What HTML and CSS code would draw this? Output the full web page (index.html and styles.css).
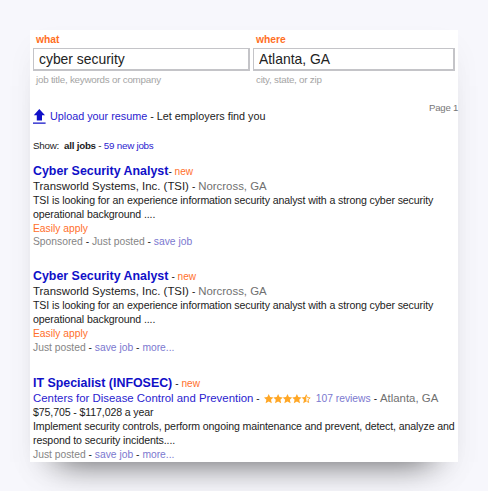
FILE: index.html
```html
<!DOCTYPE html>
<html lang="en">
<head>
<meta charset="utf-8">
<title>Job search</title>
<link rel="stylesheet" href="styles.css">
</head>
<body>
<main class="card">
  <form class="search">
    <label class="field what"><b>what</b><input value="cyber security"><small>job title, keywords or company</small></label>
    <label class="field where"><b>where</b><input value="Atlanta, GA"><small>city, state, or zip</small></label>
  </form>
  <div class="page">Page 1</div>
  <div class="upload">
    <svg width="13" height="16" viewBox="0 0 13 16"><path d="M6.3 0L12 6.3H9V11.5H3.8V6.3H.8Z M0 13.4H12.6V14.7H0Z"/></svg>
    <span><a>Upload your resume</a> - Let employers find you</span>
  </div>
  <div class="show">Show: &nbsp;<b>all jobs</b> - <a>59 new jobs</a></div>

  <article class="job first">
    <h2>Cyber Security Analyst<span class="tag"><i>-</i> new</span></h2>
    <div class="company">Transworld Systems, Inc. (TSI) <span class="sep">-</span> <span class="place">Norcross, GA</span></div>
    <p>TSI is looking for an experience information security analyst with a strong cyber security<br>operational background ....</p>
    <div class="easy">Easily apply</div>
    <div class="meta">Sponsored <i>-</i> Just posted <i>-</i> <a>save job</a></div>
  </article>

  <article class="job second">
    <h2>Cyber Security Analyst<span class="tag spaced"><i>-</i> new</span></h2>
    <div class="company">Transworld Systems, Inc. (TSI) <span class="sep">-</span> <span class="place">Norcross, GA</span></div>
    <p>TSI is looking for an experience information security analyst with a strong cyber security<br>operational background ....</p>
    <div class="easy">Easily apply</div>
    <div class="meta">Just posted <i>-</i> <a>save job</a> <i>-</i> <a>more...</a></div>
  </article>

  <article class="job third">
    <h2>IT Specialist (INFOSEC)<span class="tag spaced"><i>-</i> new</span></h2>
    <div class="company"><a>Centers for Disease Control and Prevention</a> <span class="sep">-</span>
      <svg class="stars" width="47" height="10" viewBox="0 0 47 10">
        <defs><path id="star" d="M4.7 0L6.1 3L9.4 3.4L7 5.7L7.8 9.2L4.7 7.4L1.6 9.2L2.4 5.7L0 3.4L3.3 3Z"/></defs>
        <use href="#star"/><use href="#star" x="9.4"/><use href="#star" x="18.8"/><use href="#star" x="28.2"/>
        <path d="M42.3 0V7.4L39.2 9.2L40 5.7L37.6 3.4L40.9 3Z"/>
        <path class="outline" d="M42.3 .8L43.3 3.5L46.2 3.9L44 5.7L44.7 8.5L42.3 7"/>
      </svg>
      <span class="reviews">107 reviews</span> <span class="sep">-</span> <span class="place">Atlanta, GA</span></div>
    <p>$75,705 - $117,028 a year<br>Implement security controls, perform ongoing maintenance and prevent, detect, analyze and<br>respond to security incidents....</p>
    <div class="meta">Just posted <i>-</i> <a>save job</a> <i>-</i> <a>more...</a></div>
  </article>
</main>
</body>
</html>
```
FILE: styles.css
```css
* { box-sizing: border-box; }
body {
  margin: 0;
  height: 491px;
  padding: 30px;
  overflow: hidden;
  background: #f7f7fc;
  font-family: "Liberation Sans", Arial, sans-serif;
  color: #1c1c1c;
}
.card {
  width: 428px;
  height: 432px;
  padding: 3px 0 0 3px;
  background: #fff;
  box-shadow: 0 28px 32px -28px rgba(0, 0, 0, .62), 0 14px 30px -5px rgba(0, 0, 0, .06);
  white-space: nowrap;
}
i { font-style: normal; color: #222; }
a { color: #2a22cf; }
.search { display: flex; gap: 3px; }
.field { display: block; }
.what { width: 217px; }
.where { width: 202px; }
.field b {
  display: block;
  height: 15px;
  padding-left: 3px;
  font-size: 10.3px;
  line-height: 13px;
  color: #ff6f1f;
}
.field input {
  display: block;
  width: 100%;
  height: 23px;
  padding: 0 5px;
  border: 1px solid #c4c4c8;
  border-right: 2px solid #c4c4c8;
  border-bottom: 2px solid #c4c4c8;
  border-radius: 0;
  outline: 0;
  background: #fff;
  font: 13.9px "Liberation Sans", Arial, sans-serif;
  color: #222;
}
.field small {
  display: block;
  height: 17px;
  padding-left: 3px;
  font-size: 9.8px;
  letter-spacing: -.23px;
  line-height: 17px;
  color: #a5a5a5;
}
.page {
  height: 14px;
  margin-top: 13px;
  font-size: 9.6px;
  letter-spacing: -.25px;
  line-height: 14px;
  text-align: right;
  color: #777;
}
.upload {
  display: flex;
  height: 16px;
  margin-top: -7px;
  gap: 4px;
  font-size: 10.8px;
  line-height: 16px;
}
.upload svg { margin-top: 1px; fill: #1010c8; }
.show {
  height: 14px;
  margin-top: 15px;
  font-size: 9.8px;
  letter-spacing: -.24px;
  line-height: 14px;
}
.first { margin-top: 10px; }
.second { margin-top: 20px; }
.third { margin-top: 22px; }
.job h2 {
  height: 16px;
  margin: 0;
  font-size: 12.42px;
  line-height: 16px;
  color: #1010c8;
}
.tag {
  font-size: 10.1px;
  font-weight: normal;
  color: #ff6f2c;
}
.spaced { margin-left: 3px; }
.company {
  display: flex;
  height: 15px;
  gap: 3px;
  font-size: 11.4px;
  line-height: 15px;
}
.sep { font-size: 10px; }
.place { color: #707070; }
.stars { margin: 3px 2px 0 1px; fill: #ffa726; }
.stars .outline { fill: none; stroke: #ffa726; stroke-width: .9; }
.reviews { font-size: 10.3px; color: #7b78cf; }
.job p {
  margin: -1px 0 1px;
  font-size: 10.6px;
  letter-spacing: -.12px;
  line-height: 14px;
}
.easy {
  height: 13px;
  font-size: 10.3px;
  line-height: 13px;
  color: #ff6f2c;
}
.meta {
  height: 13px;
  font-size: 10.3px;
  line-height: 13px;
  color: #858585;
}
.second .meta { line-height: 15px; }
.meta a { color: #7b78cf; }
```
